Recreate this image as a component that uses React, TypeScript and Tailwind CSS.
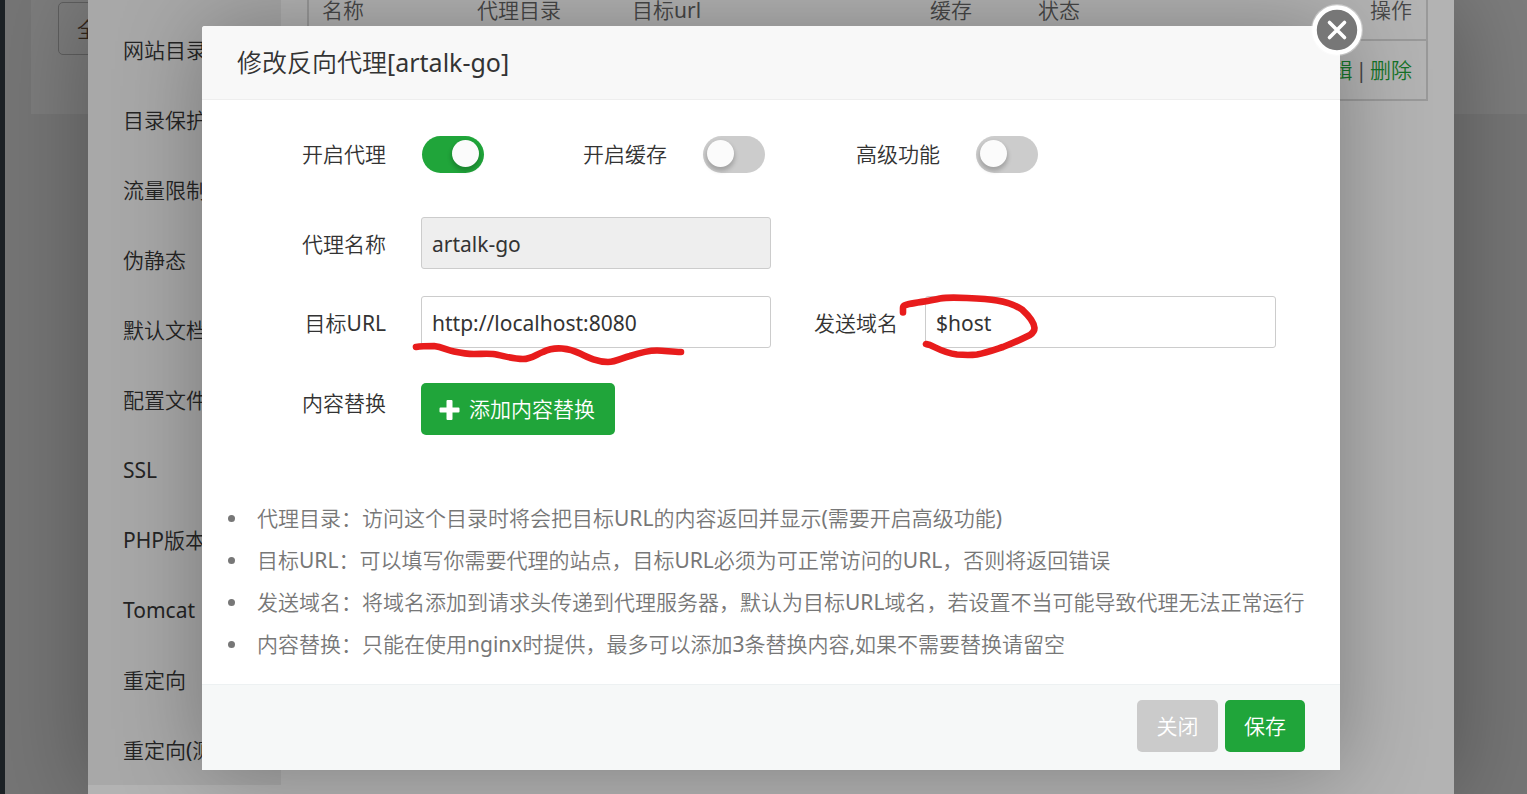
import React from "react";

const menu = [
  "网站目录",
  "目录保护",
  "流量限制",
  "伪静态",
  "默认文档",
  "配置文件",
  "SSL",
  "PHP版本",
  "Tomcat",
  "重定向",
  "重定向(测试版)",
];

const tips = [
  "代理目录：访问这个目录时将会把目标URL的内容返回并显示(需要开启高级功能)",
  "目标URL：可以填写你需要代理的站点，目标URL必须为可正常访问的URL，否则将返回错误",
  "发送域名：将域名添加到请求头传递到代理服务器，默认为目标URL域名，若设置不当可能导致代理无法正常运行",
  "内容替换：只能在使用nginx时提供，最多可以添加3条替换内容,如果不需要替换请留空",
];

function Switch({ id, on = false }: { id: string; on?: boolean }) {
  return (
    <input
      id={id}
      type="checkbox"
      role="switch"
      defaultChecked={on}
      className="h-[37px] w-[62px] shrink-0 cursor-pointer appearance-none rounded-full bg-[#ccc] px-[4px] py-[4px] before:block before:size-[27px] before:rounded-full before:bg-[#fbfbfb] before:shadow-[0_3px_4px_1px_rgba(0,0,0,0.2)] checked:bg-[#20a53a] checked:pl-[30px]"
    />
  );
}

function Sites() {
  return (
    <div className="flex h-full bg-[#757575]">
      <div className="w-[5px] shrink-0 bg-[#1d2226]" />
      <div className="flex-1 pl-[26px]">
        <div className="h-[114px] bg-[#7c7c7c] pt-[2px] pl-[27px]">
          <button className="h-[53px] rounded-[5px] border border-[#5f5f5f] px-[18px] pt-[2px] text-[#33261a]">
            全部
          </button>
        </div>
      </div>
    </div>
  );
}

function SiteDialog() {
  return (
    <section
      aria-label="站点修改"
      className="flex h-full w-full max-w-[1366px] bg-[#b3b3b3] shadow-[1px_1px_88px_rgba(0,0,0,0.3)]"
    >
      <nav className="h-[785px] w-[193px] shrink-0 bg-[#a8a8a8] pt-[15px]">
        {menu.map((m) => (
          <a key={m} href="#" className="block h-[70px] pl-[35px] leading-[70px] whitespace-nowrap text-[#242424]">
            {m}
          </a>
        ))}
      </nav>
      <div className="flex-1 pr-[26px] pl-[26px]">
        <table className="w-full table-fixed border-separate border-spacing-0 border-x-2 border-b-2 border-[#999] text-[#474747]">
          <thead>
            <tr className="h-[41px] text-left align-top leading-[20px]">
              <th className="w-[155px] border-b-2 border-[#999] pl-[13px] font-normal">名称</th>
              <th className="w-[155px] border-b-2 border-[#999] pl-[13px] font-normal">代理目录</th>
              <th className="w-[298px] border-b-2 border-[#999] pl-[13px] font-normal">目标url</th>
              <th className="w-[108px] border-b-2 border-[#999] pl-[13px] font-normal">缓存</th>
              <th className="w-[108px] border-b-2 border-[#999] pl-[13px] font-normal">状态</th>
              <th className="border-b-2 border-[#999] pr-[14px] text-right font-normal">操作</th>
            </tr>
          </thead>
          <tbody>
            <tr className="h-[58px]">
              <td colSpan={5} />
              <td className="pt-[2px] pr-[14px] text-right">
                <a href="#" className="text-[#167328]">编辑</a>
                <span className="mx-[3px]">|</span>
                <a href="#" className="text-[#167328]">删除</a>
              </td>
            </tr>
          </tbody>
        </table>
      </div>
    </section>
  );
}

const label = "w-[184px] shrink-0 text-right";
const field = "h-[52px] w-full rounded-[3px] border border-[#ccc] px-[10px] pt-[2px] text-[#333] outline-none";

function ProxyDialog() {
  return (
    <section
      role="dialog"
      aria-labelledby="title"
      className="relative w-full max-w-[1138px] rounded-t-[3px] bg-white text-[#333] shadow-[1px_1px_88px_rgba(0,0,0,0.3)]"
    >
      <header className="h-[74px] rounded-t-[3px] border-b border-[#eee] bg-[#f8f8f8] pl-[35px]">
        <h1 id="title" className="text-[25px] leading-[73px] font-normal">修改反向代理[artalk-go]</h1>
      </header>
      <button
        aria-label="关闭窗口"
        className="absolute -top-[22px] -right-[23px] size-[52px] rounded-full"
      >
        <svg viewBox="0 0 52 52" className="size-full">
          <circle cx="26" cy="26" r="26" fill="#fff" opacity="0.35" />
          <circle cx="26" cy="26" r="22.5" fill="#777" stroke="#fff" strokeWidth="4.6" />
          <path d="M18.5 18.5 33.5 33.5M33.5 18.5 18.5 33.5" stroke="#fff" strokeWidth="3.6" strokeLinecap="round" />
        </svg>
      </button>

      <form className="pt-[36px] pb-[19px]">
        <div className="flex items-center">
          <label htmlFor="proxy" className={label}>开启代理</label>
          <div className="ml-[36px] flex"><Switch id="proxy" on /></div>
          <label htmlFor="cache" className="ml-[99px]">开启缓存</label>
          <div className="ml-[36px] flex"><Switch id="cache" /></div>
          <label htmlFor="advanced" className="ml-[91px]">高级功能</label>
          <div className="ml-[36px] flex"><Switch id="advanced" /></div>
        </div>

        <div className="mt-[44px] flex items-center">
          <label htmlFor="name" className={label + " pt-[4px]"}>代理名称</label>
          <div className="ml-[35px] w-[350px]">
            <input id="name" readOnly defaultValue="artalk-go" className={field + " bg-[#eee]"} />
          </div>
        </div>

        <div className="mt-[27px] flex items-center">
          <label htmlFor="url" className={label + " pt-[4px]"}>目标URL</label>
          <div className="relative ml-[35px] w-[350px]">
            <input id="url" defaultValue="http://localhost:8080" className={field} />
            <svg
              viewBox="410 340 280 30"
              fill="none"
              className="pointer-events-none absolute top-[44px] -left-[11px] h-[30px] w-[280px]"
            >
              <path
                d="M416 347C422 346 429 346 434 346C442 347 447 350 454 351.500C461 353 468 354 474 354C481 354 487 353.500 493 354C503 355.500 512 359 523 359C531 359 536 354.500 543 352C550 348.500 556 348 562 348.500C569 349 574 350.500 580 353.500C589 358 597 362 608 362C616 362 622 358 630 356C639 353 648 350.500 657 350.500C665 350.500 672 352 681 352"
                stroke="#e81c1c"
                strokeWidth="6.600"
                strokeLinecap="round"
              />
            </svg>
          </div>
          <label htmlFor="host" className="ml-[43px] pt-[4px]">发送域名</label>
          <div className="relative ml-[27px] w-[351px]">
            <input id="host" defaultValue="$host" className={field} />
            <svg
              viewBox="895 290 150 70"
              fill="none"
              className="pointer-events-none absolute -top-[6px] -left-[30px] h-[70px] w-[150px]"
            >
              <path
                d="M903 312.500V308C903 305.500 905 305 909 304C919 302 930 301 940 298.500C948 297 958 297.500 967 298C978 298.500 988 299 997 300.500C1006 302 1015 305 1022 309.500C1028 315 1034 321 1034.500 328C1034.500 331 1033 333 1030 335C1022 339 1013 343 1003 347C994 350 986 353 977 354.500C970 355.300 963 355 957 354.500C944 353 937 348 930 345L926 344"
                stroke="#e81c1c"
                strokeWidth="6.600"
                strokeLinecap="round"
                strokeLinejoin="round"
              />
            </svg>
          </div>
        </div>

        <div className="mt-[35px] flex items-start">
          <span className={label + " leading-[40px]"}>内容替换</span>
          <button
            type="button"
            className="ml-[35px] flex h-[52px] w-[194px] items-center gap-[9px] rounded-[5px] bg-[#20a53a] pt-[2px] pl-[18px] whitespace-nowrap text-white"
          >
            <svg viewBox="0 0 21 20" className="h-[20px] w-[21px] shrink-0" fill="#fff">
              <path d="M8.500 0h4a1 1 0 0 1 1 1v6.500h6a1 1 0 0 1 1 1v3a1 1 0 0 1-1 1h-6V19a1 1 0 0 1-1 1h-4a1 1 0 0 1-1-1v-6.500h-6a1 1 0 0 1-1-1v-3a1 1 0 0 1 1-1h6V1a1 1 0 0 1 1-1Z" />
            </svg>
            添加内容替换
          </button>
        </div>

        <ul className="mt-[62px] pr-[30px] pl-[26px] leading-[42px] text-[#777]">
          {tips.map((t) => (
            <li key={t} className="flex items-center">
              <span className="mr-[22px] size-[7px] shrink-0 rounded-full bg-[#777]" />
              <span className="whitespace-nowrap">{t}</span>
            </li>
          ))}
        </ul>
      </form>

      <footer className="flex justify-end gap-[7px] border-t border-[#edf1f2] bg-[#f6f8f8] pt-[15px] pr-[35px] pb-[18px] text-white">
        <button className="h-[52px] w-[81px] rounded-[5px] bg-[#cbcbcb] pt-[2px]">关闭</button>
        <button className="h-[52px] w-[80px] rounded-[5px] bg-[#20a53a] pt-[2px]">保存</button>
      </footer>
    </section>
  );
}

export default function App() {
  return (
    <main className="relative h-screen overflow-hidden font-['Noto_Sans','Noto_Sans_CJK_SC_DemiLight','Noto_Sans_CJK_SC',sans-serif] text-[21px] font-normal">
      <Sites />
      <div className="absolute inset-0 flex justify-center pl-[15px]">
        <SiteDialog />
      </div>
      <div className="absolute inset-0 flex items-start justify-center pt-[26px] pl-[15px]">
        <ProxyDialog />
      </div>
    </main>
  );
}
